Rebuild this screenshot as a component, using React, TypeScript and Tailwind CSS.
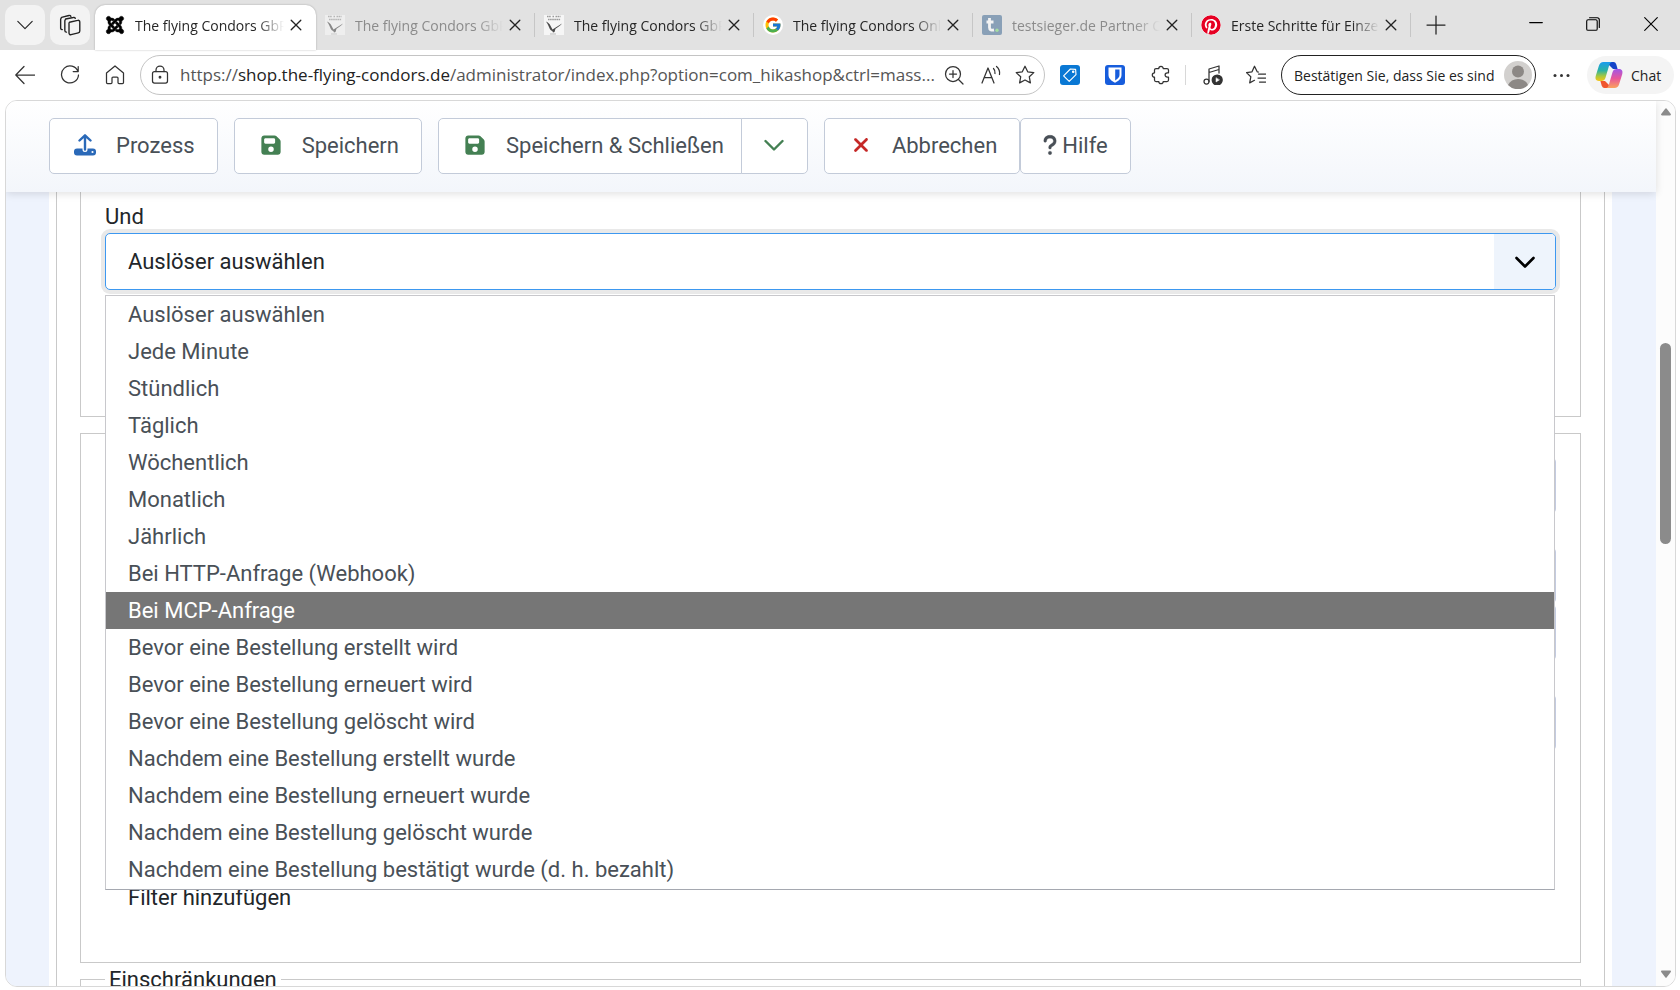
import type { ReactNode } from "react";
import { FaJoomla, FaPinterest } from "react-icons/fa";
import { FaFloppyDisk, FaQuestion, FaXmark } from "react-icons/fa6";
import { FcGoogle } from "react-icons/fc";

const triggers = [
  "Auslöser auswählen",
  "Jede Minute",
  "Stündlich",
  "Täglich",
  "Wöchentlich",
  "Monatlich",
  "Jährlich",
  "Bei HTTP-Anfrage (Webhook)",
  "Bei MCP-Anfrage",
  "Bevor eine Bestellung erstellt wird",
  "Bevor eine Bestellung erneuert wird",
  "Bevor eine Bestellung gelöscht wird",
  "Nachdem eine Bestellung erstellt wurde",
  "Nachdem eine Bestellung erneuert wurde",
  "Nachdem eine Bestellung gelöscht wurde",
  "Nachdem eine Bestellung bestätigt wurde (d. h. bezahlt)",
];

/* --- Icons --- */
function Icon({ size = 20, width = 1.25, className = "", children }: { size?: number; width?: number; className?: string; children: ReactNode }) {
  return (
    <svg
      width={size}
      height={size}
      viewBox="0 0 20 20"
      fill="none"
      stroke="currentColor"
      strokeWidth={width}
      strokeLinecap="round"
      strokeLinejoin="round"
      className={`shrink-0 ${className}`}
      aria-hidden="true"
    >
      {children}
    </svg>
  );
}

function CondorIcon() {
  return (
    <svg width="20" height="20" viewBox="0 0 20 20" aria-hidden="true">
      <rect width="20" height="20" fill="#f6f6f6" />
      <path d="M3 1.500h4M8.500 1.500h1.500M11.500 1.500h5M4 4.500h12.500" stroke="#9a9a9a" strokeWidth="1.300" strokeDasharray="1.600 .5" />
      <path d="M2 6.500c2 .8 3.500 2.200 4.500 4.200l2 3.800L18 8.500c-1.500 2-4 3.800-6.500 5.300L10.500 17 9 17.500 8.300 16C5 15 5.500 11 2 6.500z" fill="#4a4a4a" />
      <path d="M6 19h6" stroke="#bbb" strokeWidth="1" />
    </svg>
  );
}

function TestsiegerIcon() {
  return (
    <svg width="20" height="20" viewBox="0 0 20 20" aria-hidden="true">
      <rect width="20" height="20" rx="2" fill="#4f759b" />
      <path d="M7.500 3v9.500c0 2.200 1.500 3 4.500 2.500M4.500 7h7" stroke="#fff" strokeWidth="2.800" fill="none" />
      <circle cx="15" cy="15.300" r="1.700" fill="#7ddb78" />
    </svg>
  );
}

function CopilotIcon() {
  return (
    <svg width="28" height="28" viewBox="0 0 28 28" className="shrink-0" aria-hidden="true">
      <defs>
        <linearGradient id="cpA" x1="0" y1="0" x2="0" y2="1">
          <stop offset="0" stopColor="#1a9bf0" />
          <stop offset=".45" stopColor="#2bb3a3" />
          <stop offset=".75" stopColor="#a9c83c" />
          <stop offset="1" stopColor="#f5c518" />
        </linearGradient>
        <linearGradient id="cpB" x1="0" y1="0" x2="0" y2="1">
          <stop offset="0" stopColor="#a056e8" />
          <stop offset=".5" stopColor="#e8569a" />
          <stop offset="1" stopColor="#fba35c" />
        </linearGradient>
      </defs>
      <path d="M11 1h7.500c1.600 0 2.400 1.200 2.900 2.800L22.600 8H18z" fill="#1544c8" />
      <path d="M17 27H9.500c-1.600 0-2.400-1.200-2.900-2.800L5.400 20H10z" fill="#f0562e" />
      <path d="M8.500 1H17c-1.600.3-2.300 1.600-2.900 3.600l-3.600 12.200C9.700 19.300 8.500 20 6.500 20H4C.8 20 0 17.600.8 14.800L3.900 4.800C4.700 2.300 6 1 8.500 1z" fill="url(#cpA)" />
      <path d="M19.500 27H11c1.600-.3 2.300-1.600 2.900-3.600l3.600-12.200C18.300 8.700 19.500 8 21.500 8H24c3.200 0 4 2.400 3.200 5.200l-3.100 10C23.300 25.700 22 27 19.500 27z" fill="url(#cpB)" />
    </svg>
  );
}

function UploadIcon() {
  return (
    <svg width="22" height="22" viewBox="0 0 22 22" aria-hidden="true" className="shrink-0">
      <path d="M3 14.500h5.500v1a2.500 2.500 0 0 0 5 0v-1H19a3 3 0 0 1 3 3v1a3 3 0 0 1-3 3H3a3 3 0 0 1-3-3v-1a3 3 0 0 1 3-3z" fill="#2a69b8" />
      <circle cx="18.500" cy="18" r="1.100" fill="#fff" />
      <path d="M11 15.500V1.500M5.500 6.500 11 1.300l5.500 5.200" stroke="#2a69b8" strokeWidth="2.400" fill="none" strokeLinecap="round" strokeLinejoin="round" />
    </svg>
  );
}

/* --- Browser window --- */
function Tab({ icon, title, active, muted }: { icon: ReactNode; title: string; active?: boolean; muted?: boolean }) {
  return (
    <div
      className={
        active
          ? "relative z-10 flex h-[45px] w-[221px] items-center self-end rounded-t-[10px] bg-white pr-3 pb-[5px] pl-[10px] shadow-[0_0_2px_rgba(0,0,0,0.3)]"
          : "flex h-[45px] w-[219px] items-center self-end pb-[5px] pl-[9px]"
      }
    >
      <span className={muted ? "w-5 shrink-0 opacity-60" : "w-5 shrink-0"}>{icon}</span>
      <span
        className={`ml-[10px] flex-1 overflow-hidden text-[14px] whitespace-nowrap [mask-image:linear-gradient(to_right,#000_82%,transparent)] ${
          muted ? "text-[#8b8b8b]" : "text-[#262626]"
        }`}
      >
        {title}
      </span>
      <button type="button" aria-label="Tab schließen" className="ml-1 flex w-4 shrink-0 justify-center text-[#222]">
        <Icon size={12} width={2.2}>
          <path d="M2 2l16 16M18 2 2 18" />
        </Icon>
      </button>
      {!active && <span className="ml-[11px] h-6 w-px bg-[#c6c6c6]" />}
    </div>
  );
}

function TabStrip() {
  return (
    <div className="flex h-[50px] items-center bg-[#e2e2e2] pl-[5px] text-[#222]">
      <button type="button" aria-label="Registerkarten suchen" className="flex size-10 items-center justify-center rounded-[10px] bg-[#f3f3f3]">
        <Icon size={18}>
          <path d="M2 6l8 8 8-8" />
        </Icon>
      </button>
      <button type="button" aria-label="Arbeitsbereiche" className="mr-[5px] ml-[5px] flex size-10 items-center justify-center rounded-[10px] bg-[#f3f3f3]">
        <Icon size={22}>
          <path d="M9.500 7.500 17 5.800a1.500 1.500 0 0 1 1.900 1.400v8.300a1.800 1.800 0 0 1-1.400 1.700L11 18.800a1.500 1.500 0 0 1-1.900-1.500V8.200z" />
          <path d="M6.800 16.500a1.500 1.500 0 0 1-1.500-1.500V6.200l.7-1.700L13 3.200a1.500 1.500 0 0 1 1.800.8" />
          <path d="M3 14.200A1.500 1.500 0 0 1 1.500 13V4.800L2.300 3 9 1.400a1.500 1.500 0 0 1 1.800.7" />
        </Icon>
      </button>
      <Tab active icon={<FaJoomla size={20} color="#000" stroke="#000" strokeWidth={10} />} title="The flying Condors GbR" />
      <Tab muted icon={<CondorIcon />} title="The flying Condors GbR" />
      <Tab icon={<CondorIcon />} title="The flying Condors GbR" />
      <Tab
        icon={
          <span className="flex size-5 items-center justify-center rounded-full bg-white">
            <FcGoogle size={18} />
          </span>
        }
        title="The flying Condors Online"
      />
      <Tab muted icon={<TestsiegerIcon />} title="testsieger.de Partner Center" />
      <Tab icon={<FaPinterest size={20} color="#e60023" className="rounded-full bg-white" />} title="Erste Schritte für Einzelhändler" />
      <button type="button" aria-label="Neuer Tab" className="ml-[15px]">
        <Icon>
          <path d="M10 1v18M1 10h18" />
        </Icon>
      </button>
      <div className="ml-auto flex items-center pr-[22px] pb-[2px] text-black">
        <button type="button" aria-label="Minimieren" className="mr-[43px]">
          <Icon size={14} width={1.6}>
            <path d="M1 8h18" />
          </Icon>
        </button>
        <button type="button" aria-label="Verkleinern" className="mr-[44px]">
          <Icon size={14} width={1.6}>
            <rect x="1" y="4" width="15" height="15" rx="2" />
            <path d="M5 1h11a3 3 0 0 1 3 3v11" />
          </Icon>
        </button>
        <button type="button" aria-label="Schließen">
          <Icon size={14} width={1.6}>
            <path d="M1 1l18 18M19 1 1 19" />
          </Icon>
        </button>
      </div>
    </div>
  );
}

function AddressRow() {
  return (
    <div className="flex h-[50px] items-center pr-[6px] pl-[15px] text-[#333]">
      <button type="button" aria-label="Zurück">
        <Icon>
          <path d="M19.500 10H1M9 1.500.8 10 9 18.500" />
        </Icon>
      </button>
      <button type="button" aria-label="Aktualisieren" className="ml-[25px]">
        <Icon>
          <path d="M18 6.500A8.500 8.500 0 1 0 18.500 10M18.200 1.500v5h-5" />
        </Icon>
      </button>
      <button type="button" aria-label="Startseite" className="ml-[25px]">
        <Icon>
          <path d="M1.500 8 10 1l8.500 7v9.500a1 1 0 0 1-1 1h-3.500a1 1 0 0 1-1-1V13a1 1 0 0 0-1-1h-4a1 1 0 0 0-1 1v4.500a1 1 0 0 1-1 1H2.500a1 1 0 0 1-1-1z" />
        </Icon>
      </button>

      <div className="ml-[15px] flex h-10 min-w-0 flex-1 items-center rounded-full border border-[#c4c4c4] bg-white pr-[9px] pl-[9px]">
        <Icon>
          <rect x="2.500" y="6.500" width="15" height="11.500" rx="2" />
          <path d="M6 6.500V5a4 4 0 0 1 8 0v1.500" />
          <circle cx="10" cy="12.200" r=".8" fill="currentColor" />
        </Icon>
        <p className="ml-[10px] min-w-0 flex-1 truncate text-[17px] text-[#555]">
          https://<span className="text-[#222]">shop.the-flying-condors.de</span>/administrator/index.php?option=com_hikashop&amp;ctrl=mass...
        </p>
        <button type="button" aria-label="Zoom">
          <Icon>
            <circle cx="9" cy="9" r="7.500" />
            <path d="M14.500 14.500 19 19M9 5.500v7M5.500 9h7" />
          </Icon>
        </button>
        <button type="button" aria-label="Laut vorlesen" className="ml-[17px]">
          <Icon>
            <path d="M1 18 7 3l6 15M3 12.500h8" />
            <path d="M12.500 3.500c1.300 1.300 1.800 3 1.500 5M15.500 1.500c2.500 2.200 3.500 5 3 8" />
          </Icon>
        </button>
        <button type="button" aria-label="Favorit" className="ml-[14px]">
          <Icon>
            <path d="M10 1.200l2.700 5.600 6.100.8-4.500 4.200 1.100 6.100L10 15l-5.400 2.900 1.100-6.100L1.200 7.600l6.100-.8z" />
          </Icon>
        </button>
      </div>

      <button type="button" aria-label="Shopping" className="ml-[15px] flex size-5 items-center justify-center rounded-[3px] bg-[#0a78d4] text-white">
        <Icon size={16} width={1.4}>
          <path d="M2 11 10.500 2.500 17 3l.5 6.500L9 18z" />
          <circle cx="14" cy="6" r=".9" fill="currentColor" />
        </Icon>
      </button>
      <button type="button" aria-label="Bitwarden" className="ml-[25px] flex size-5 items-center justify-center rounded-[3px] bg-[#175ddc]">
        <svg width="14" height="16" viewBox="0 0 14 16" aria-hidden="true">
          <path d="M.5.500h13V8c0 3.500-3 6-6.500 7.800C3.500 14 .5 11.500.5 8z" fill="#fff" />
          <path d="M7.200 2.500h4.300V8c0 2.400-2 4.100-4.300 5.400z" fill="#175ddc" />
        </svg>
      </button>
      <button type="button" aria-label="Erweiterungen" className="ml-[26px]">
        <Icon>
          <path d="M5 3.500h2.800a2.200 2.200 0 0 1 4.400 0H16A1.500 1.500 0 0 1 17.500 5v2.800h-1.200a2.200 2.200 0 0 0 0 4.400h1.200V15a1.500 1.500 0 0 1-1.500 1.500h-3.800a2.200 2.200 0 0 1-4.400 0H5A1.500 1.500 0 0 1 3.500 15v-2.800a2.200 2.200 0 0 1 0-4.400V5A1.500 1.500 0 0 1 5 3.500z" />
        </Icon>
      </button>
      <span className="ml-[14px] h-5 w-px bg-[#d8d8d8]" />
      <button type="button" aria-label="Medien" className="ml-[17px]">
        <Icon>
          <circle cx="3.500" cy="16.500" r="2.500" />
          <path d="M6 16.500V4l10-3v7M6 7.500l10-3" />
          <circle cx="14.200" cy="15" r="5" fill="currentColor" />
          <path d="M13 13v4l3.200-2z" fill="#fff" stroke="#fff" strokeWidth=".5" />
        </Icon>
      </button>
      <button type="button" aria-label="Favoriten" className="ml-[23px]">
        <Icon>
          <path d="M12.500 7 11.200 6.800 8.500 1.200 6 6.800l-5.500.8 4.300 4.200-1.100 6.100 4.800-2.600M12.500 9h7M12 13h7.500M13.500 17h6" />
        </Icon>
      </button>

      <button type="button" className="ml-[15px] flex h-10 w-[255px] items-center justify-between rounded-full border border-[#222] bg-white pr-[3px] pl-3 text-[14px] whitespace-nowrap text-[#222]">
        Bestätigen Sie, dass Sie es sind
        <svg width="28" height="28" viewBox="0 0 28 28" className="shrink-0" aria-hidden="true">
          <circle cx="14" cy="14" r="14" fill="#d2d0ce" />
          <circle cx="14" cy="10.500" r="6" fill="#8c8885" />
          <path d="M4 24c2-4 5.500-6 10-6s8 2 10 6a14 14 0 0 1-20 0z" fill="#8c8885" />
        </svg>
      </button>
      <button type="button" aria-label="Einstellungen" className="ml-4">
        <svg width="20" height="20" viewBox="0 0 20 20" fill="#333" aria-hidden="true">
          <circle cx="3" cy="10.500" r="1.500" />
          <circle cx="9.500" cy="10.500" r="1.500" />
          <circle cx="16" cy="10.500" r="1.500" />
        </svg>
      </button>
      <button type="button" className="ml-[15px] flex h-[38px] w-[87px] items-center gap-2 rounded-full bg-[#f4f4f4] pl-2 text-[14px] text-[#222]">
        <CopilotIcon />
        Chat
      </button>
    </div>
  );
}

/* --- Joomla administration --- */
function Toolbar() {
  const button = "flex h-14 items-center rounded-[5px] border border-[#c3cbd9] bg-white pb-[2px]";
  return (
    <div className="relative z-20 flex h-[91px] shrink-0 items-start bg-gradient-to-b from-white to-[#f3f6fb] px-[43px] pt-[17px] text-[22px] text-[#495057] shadow-[0_2px_8px_rgba(0,0,0,0.12)]">
      <button type="button" className={`${button} gap-5 pr-[22px] pl-[24px]`}>
        <UploadIcon />
        Prozess
      </button>
      <button type="button" className={`${button} ml-4 gap-5 pr-[22px] pl-[25px]`}>
        <FaFloppyDisk size={22} color="#448053" />
        Speichern
      </button>
      <div className="ml-4 flex">
        <button type="button" className={`${button} gap-5 rounded-r-none pr-[17px] pl-[25px]`}>
          <FaFloppyDisk size={22} color="#448053" />
          Speichern &amp; Schließen
        </button>
        <button type="button" aria-label="Weitere Aktionen" className={`${button} -ml-px w-[67px] justify-center rounded-l-none text-[#448053]`}>
          <Icon size={20} width={2.4}>
            <path d="M1.500 6l8.500 8.500L18.500 6" />
          </Icon>
        </button>
      </div>
      <button type="button" className={`${button} ml-4 gap-5 pr-[22px] pl-[25px]`}>
        <FaXmark size={22} color="#c52827" />
        Abbrechen
      </button>
      <button type="button" className={`${button} gap-[5px] px-[22px]`}>
        <FaQuestion size={22} className="-mx-1" stroke="currentColor" strokeWidth={8} />
        Hilfe
      </button>
    </div>
  );
}

function TriggerSelect() {
  return (
    <div className="relative">
      <select
        id="trigger"
        defaultValue={triggers[0]}
        className="block h-[57px] w-full appearance-none rounded-[5px] border border-[#3d98f0] bg-white px-[22px] text-[#22262a] ring-4 ring-[#e9e9e9] outline-none"
      >
        {triggers.map((trigger) => (
          <option key={trigger}>{trigger}</option>
        ))}
      </select>
      <span className="pointer-events-none absolute inset-y-px right-px flex w-[61px] items-center justify-center rounded-r-[4px] bg-[#eef4fc] text-black">
        <Icon size={20} width={2.6}>
          <path d="M1.500 6l8.500 8.500L18.500 6" />
        </Icon>
      </span>

      {/* Geöffnete Liste */}
      <ul role="listbox" aria-label="Auslöser" className="absolute top-full right-px left-0 z-10 mt-[5px] border border-[#c8c8cc] border-b-[#a5a8b0] bg-white pb-px text-[#495057]">
        {triggers.map((trigger) => (
          <li
            key={trigger}
            role="option"
            aria-selected={trigger === "Bei MCP-Anfrage"}
            className={trigger === "Bei MCP-Anfrage" ? "h-[37px] bg-[#767676] px-[22px] leading-[37px] text-white" : "h-[37px] px-[22px] leading-[37px]"}
          >
            {trigger}
          </li>
        ))}
      </ul>
    </div>
  );
}

function FilterSelect({ label, className = "" }: { label: string; className?: string }) {
  return (
    <select aria-label={label} className={`block h-[57px] w-full appearance-none rounded-[5px] border border-[#c3cbe0] bg-white px-[22px] ${className}`} />
  );
}

function MassActionForm() {
  return (
    <div className="min-h-0 flex-1 overflow-hidden bg-[#eef3fd] pr-11 pl-[43px] text-[22px] leading-[33px] text-[#22262a]">
      <div className="h-full bg-white px-[7px]">
        <div className="h-full border-x border-[#c9c9c9] px-[23px]">
          <section className="relative z-10 border border-t-0 border-[#c9c9c9] px-6 pt-2 pb-[126px]">
            <label htmlFor="trigger" className="block">
              Und
            </label>
            <TriggerSelect />
          </section>
          <section className="mt-4 border border-[#c9c9c9] px-6 pt-[23px] pb-12">
            <FilterSelect label="Tabelle" />
            <FilterSelect label="Filter" className="mt-[33px]" />
            <FilterSelect label="Operator" />
            <FilterSelect label="Wert" className="mt-[33px]" />
            <p className="mt-[130px] pl-[23px]">Filter hinzufügen</p>
          </section>
          <fieldset className="h-24 border border-[#c9c9c9] px-6">
            <legend className="px-1">Einschränkungen</legend>
          </fieldset>
        </div>
      </div>
    </div>
  );
}

function ScrollBar() {
  return (
    <div className="flex w-[19px] shrink-0 flex-col items-center bg-[#fcfcfc] pt-[7px] pb-2" aria-hidden="true">
      <svg width="10" height="8" viewBox="0 0 10 8" fill="#8b8b8b">
        <path d="M4.200.8a1 1 0 0 1 1.600 0l4 5.200c.4.700 0 1.500-.8 1.500H1C.2 7.500-.2 6.700.2 6z" />
      </svg>
      <span className="mt-[227px] h-[201px] w-[11px] rounded-full bg-[#8b8b8b]" />
      <svg width="10" height="8" viewBox="0 0 10 8" fill="#8b8b8b" className="mt-auto">
        <path d="M4.200 7.200a1 1 0 0 0 1.600 0l4-5.200C10.200 1.300 9.800.5 9 .5H1C.2.500-.2 1.300.2 2z" />
      </svg>
    </div>
  );
}

export default function App() {
  return (
    <div className="flex h-screen flex-col overflow-hidden bg-white font-['Open_Sans','Segoe_UI',sans-serif]">
      <TabStrip />
      <AddressRow />
      <main className="mr-1 mb-[3px] ml-[5px] flex min-h-0 flex-1 overflow-hidden rounded-[12px] border border-[#d8d8d8] font-[Roboto,sans-serif]">
        <div className="flex min-w-0 flex-1 flex-col">
          <Toolbar />
          <MassActionForm />
        </div>
        <ScrollBar />
      </main>
    </div>
  );
}
